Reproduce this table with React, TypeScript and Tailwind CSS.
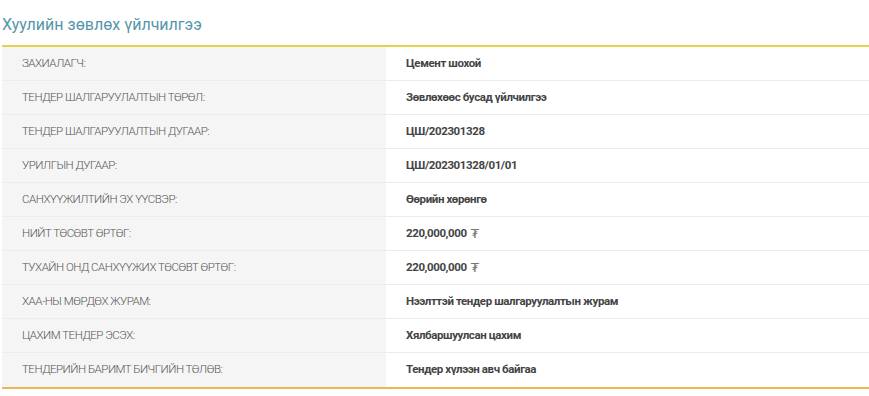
import React from "react";

const rows: [string, string, boolean?][] = [
  ["ЗАХИАЛАГЧ:", "Цемент шохой"],
  ["ТЕНДЕР ШАЛГАРУУЛАЛТЫН ТӨРӨЛ:", "Зөвлөхөөс бусад үйлчилгээ"],
  ["ТЕНДЕР ШАЛГАРУУЛАЛТЫН ДУГААР:", "ЦШ/202301328"],
  ["УРИЛГЫН ДУГААР:", "ЦШ/202301328/01/01"],
  ["САНХҮҮЖИЛТИЙН ЭХ ҮҮСВЭР:", "Өөрийн хөрөнгө"],
  ["НИЙТ ТӨСӨВТ ӨРТӨГ:", "220,000,000", true],
  ["ТУХАЙН ОНД САНХҮҮЖИХ ТӨСӨВТ ӨРТӨГ:", "220,000,000", true],
  ["ХАА-НЫ МӨРДӨХ ЖУРАМ:", "Нээлттэй тендер шалгаруулалтын журам"],
  ["ЦАХИМ ТЕНДЕР ЭСЭХ:", "Хялбаршуулсан цахим"],
  ["ТЕНДЕРИЙН БАРИМТ БИЧГИЙН ТӨЛӨВ:", "Тендер хүлээн авч байгаа"],
];

export default function App() {
  return (
    <div
      className="w-[869px] h-[396px] bg-white pl-[2px] pt-[14px]"
      style={{ fontFamily: "Roboto, 'Liberation Sans', sans-serif" }}
    >
      <h2 className="text-[16px] leading-[22px] text-[#5595aa] font-normal mb-[9px]">
        Хуулийн зөвлөх үйлчилгээ
      </h2>
      <div className="border-t-2 border-[#e6d24a] border-b-2 border-b-[#e9b659]">
        {rows.map(([k, v, money], i) => (
          <div
            key={i}
            className={`flex h-[34px] items-center ${i < rows.length - 1 ? "border-b border-[#ececec]" : ""}`}
          >
            <div className="w-[384px] h-full flex items-center bg-[#f5f5f5] pl-[20px] text-[11.5px] tracking-[-0.5px] text-[#555] font-light">
              {k}
            </div>
            <div className="flex-1 h-full flex items-center pl-[20px] text-[11.5px] tracking-[-0.4px] font-bold text-[#444]">
              {v}
              {money && (
                <span
                  className="ml-[4px] font-normal text-[#777] text-[13px]"
                  style={{ fontFamily: "'DejaVu Sans', sans-serif" }}
                >
                  ₮
                </span>
              )}
            </div>
          </div>
        ))}
      </div>
    </div>
  );
}
